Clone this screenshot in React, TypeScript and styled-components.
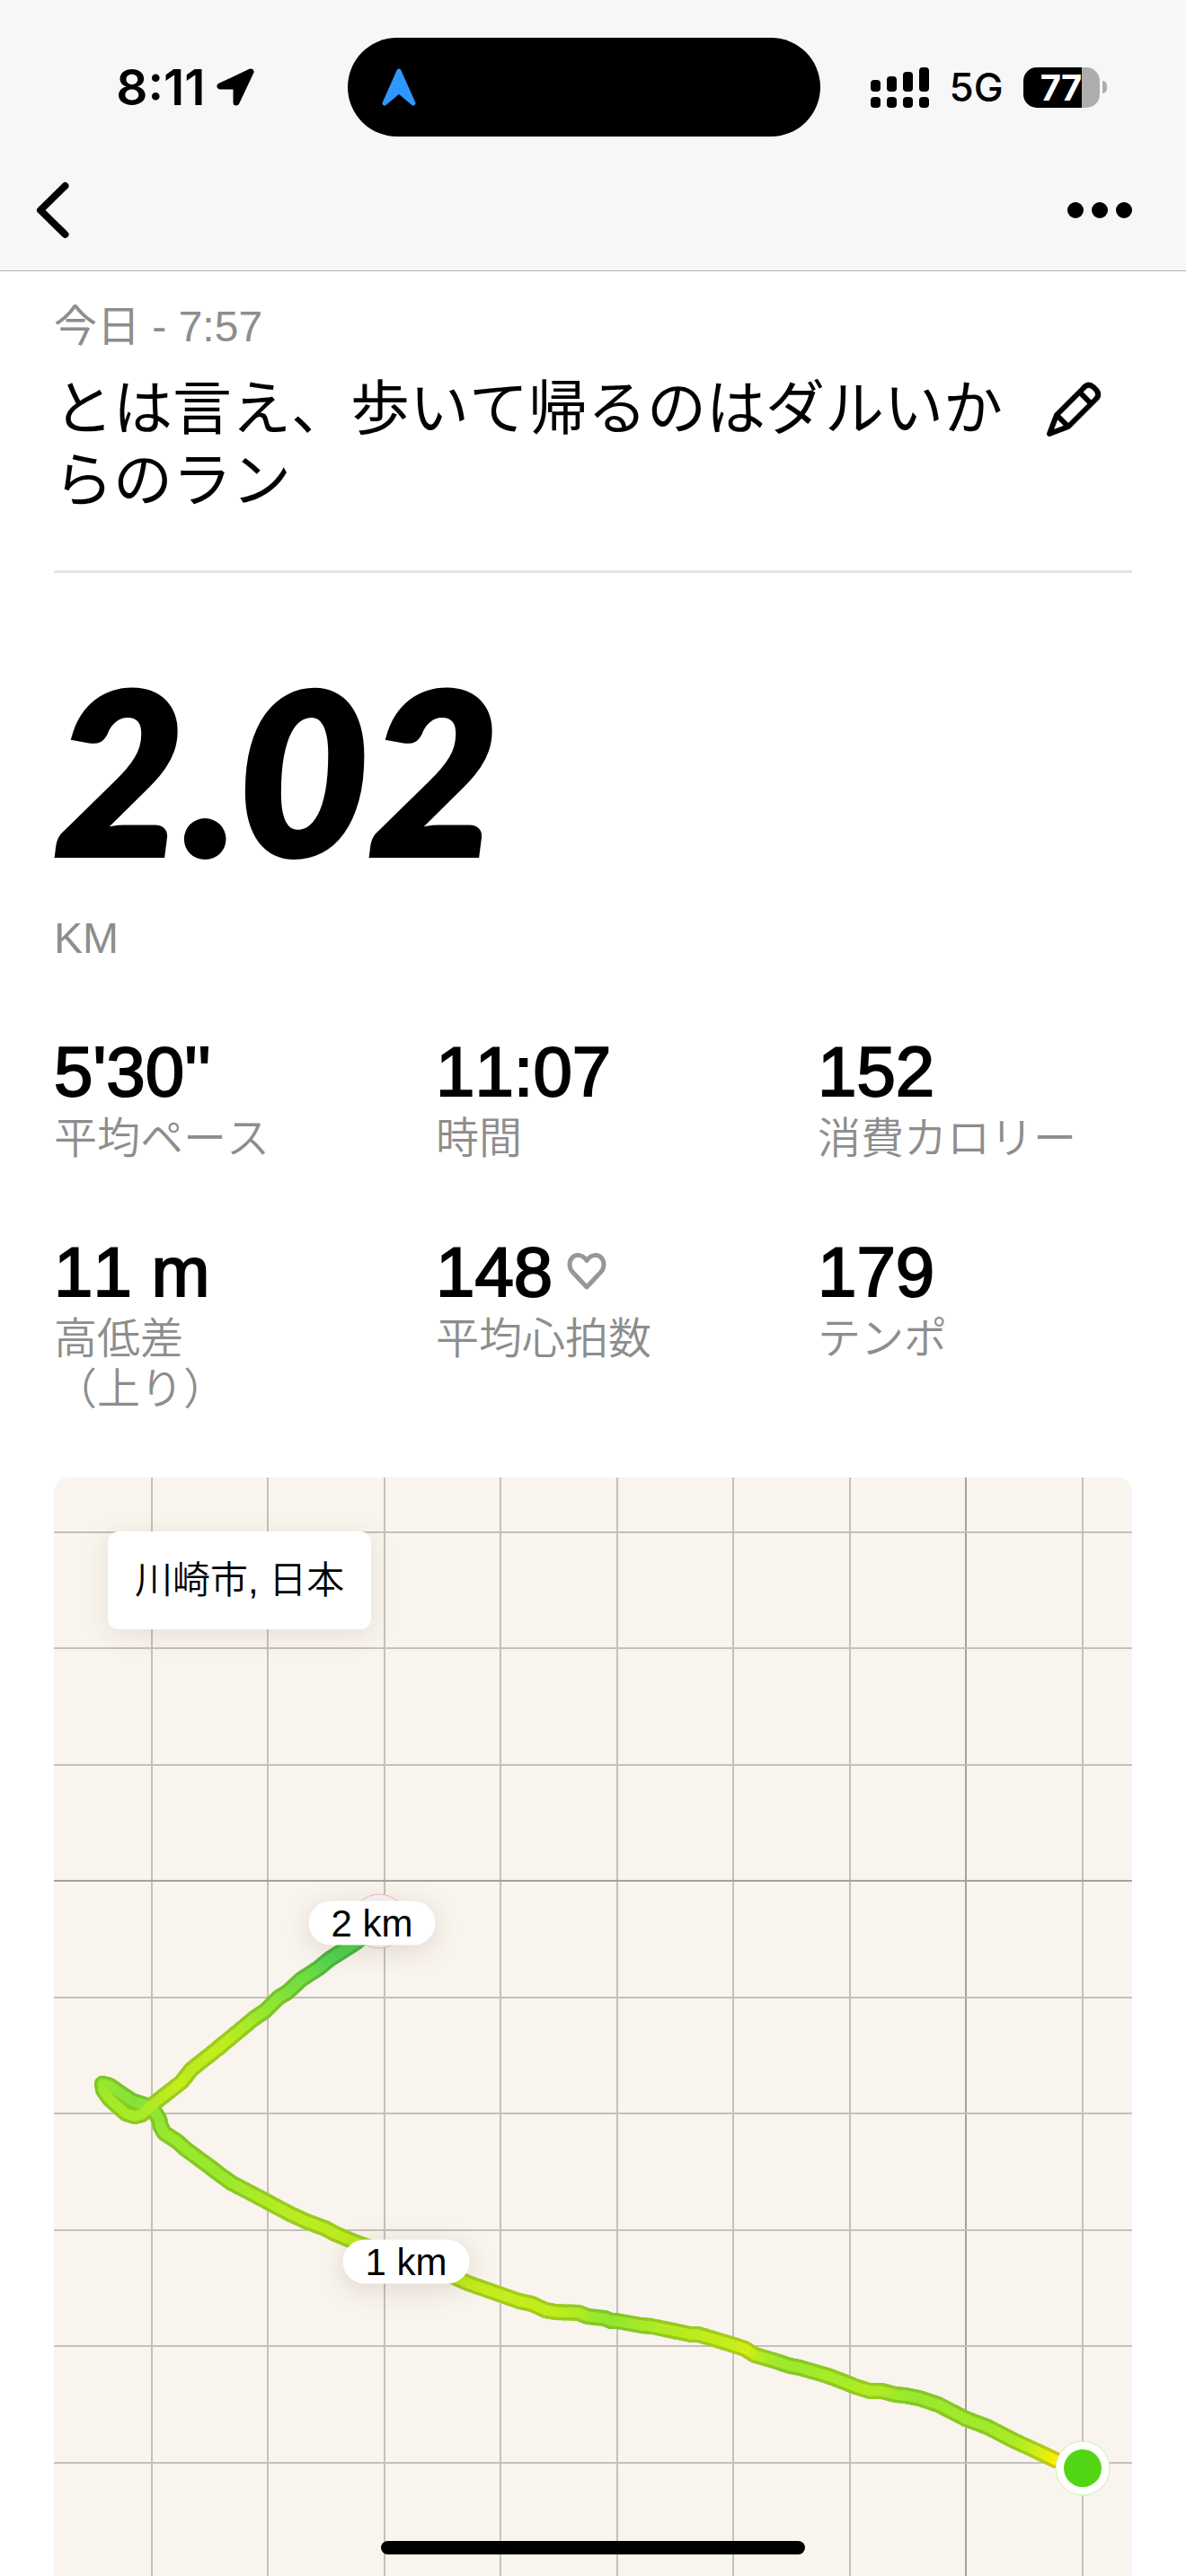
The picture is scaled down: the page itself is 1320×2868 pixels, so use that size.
import React from "react";
import styled, { createGlobalStyle } from "styled-components";

const GlobalStyle = createGlobalStyle`
  * { box-sizing: border-box; }
  body {
    margin: 0;
    background: #ffffff;
    color: #000000;
    font-family: "Liberation Sans", "Noto Sans CJK JP", sans-serif;
    font-kerning: none;
  }
  h1, p, dl, dt, dd { margin: 0; font-weight: 400; }
`;

const Screen = styled.div`
  display: flex;
  flex-direction: column;
`;

const Header = styled.header`
  background: #f7f7f7;
  border-bottom: 1px solid #b2b2b2;
  padding-bottom: 28px;
`;

const StatusBar = styled.div`
  display: grid;
  grid-template-columns: 1fr 526px 1fr;
  align-items: center;
  height: 194px;
  padding-right: 21px;
  font-family: Inter, sans-serif;
`;

const ClockGroup = styled.div`
  display: flex;
  align-items: center;
  justify-content: flex-end;
  gap: 12px;
  padding-right: 104px;
  font-size: 55px;
  font-weight: 600;
  line-height: 60px;
`;

const Island = styled.div`
  display: flex;
  align-items: center;
  height: 110px;
  padding: 0 38px;
  border-radius: 55px;
  background: #000000;
`;

const StatusIcons = styled.div`
  display: flex;
  align-items: center;
  padding-left: 56px;
  gap: 22px;
  font-size: 44px;
  font-weight: 500;
  line-height: 60px;
`;

const Battery = styled.div`
  display: flex;
  align-items: center;
  gap: 3px;

  &::after {
    content: "";
    width: 5px;
    height: 14px;
    border-radius: 0 5px 5px 0;
    background: #adadad;
  }
`;

const BatteryBody = styled.div<{ $level: number }>`
  width: 85px;
  height: 45px;
  border-radius: 15px;
  background: linear-gradient(to right, #000000 ${(p) => p.$level}%, #adadad ${(p) => p.$level}%);
  color: #ffffff;
  font-size: 40px;
  font-weight: 700;
  line-height: 45px;
  text-align: center;
`;

const NavBar = styled.nav`
  display: flex;
  align-items: center;
  justify-content: space-between;
  height: 79px;
  padding: 0 60px 0 38px;
`;

const IconButton = styled.button`
  display: flex;
  flex: none;
  padding: 0;
  border: 0;
  background: none;
  color: inherit;
  cursor: pointer;
`;

const Main = styled.main`
  display: flex;
  flex-direction: column;
  padding: 32px 60px 0;
`;

const Muted = styled.p`
  color: #8d8d8d;
  font-size: 48px;
  line-height: 60px;
`;

const TitleRow = styled.div`
  display: flex;
  align-items: flex-start;
  gap: 48px;
  padding: 21px 34px 60px 0;
  border-bottom: 3px solid #e5e5e5;

  button { margin-top: 10px; }
`;

const Title = styled.h1`
  flex: 1;
  font-size: 66px;
  line-height: 80px;
`;

const Distance = styled.p`
  margin: 97px 0 40px;
  font-family: Lato, sans-serif;
  font-size: 250px;
  font-style: italic;
  font-weight: 900;
  line-height: 240px;
  -webkit-text-stroke: 6px #000000;
`;

const Stats = styled.dl`
  display: grid;
  grid-template-columns: repeat(3, 1fr);
  gap: 80px 75px;
  padding: 78px 0 70px;
`;

const Stat = styled.div`
  display: flex;
  flex-direction: column-reverse;
  justify-content: flex-end;
  gap: 7px;
`;

const StatLabel = styled.dt`
  color: #8d8d8d;
  font-size: 48px;
  font-weight: 350;
  line-height: 56px;
  white-space: pre-line;
`;

const StatValue = styled.dd`
  display: flex;
  align-items: center;
  gap: 16px;
  font-size: 78px;
  line-height: 80px;
  -webkit-text-stroke: 2px #000000;
`;

const MapCard = styled.section`
  position: relative;
  overflow: hidden;
  border-radius: 16px 16px 0 0;
  background: #f9f4ed;
`;

const MapDrawing = styled.svg`
  display: block;
  width: 100%;
  height: auto;
`;

const Place = styled.div`
  position: absolute;
  top: 60px;
  left: 60px;
  padding: 0 30px;
  border-radius: 12px;
  background: #ffffff;
  box-shadow: 0 6px 30px rgba(60, 50, 20, 0.1);
  font-size: 42px;
  line-height: 109px;
  font-weight: 350;
`;

const KmPin = styled.div<{ $x: number; $y: number }>`
  position: absolute;
  left: ${(p) => p.$x / 12}%;
  top: ${(p) => (p.$y / 1223) * 100}%;
  width: 141px;
  transform: translate(-50%, -50%);
  border-radius: 25px;
  background: #ffffff;
  box-shadow: 0 6px 30px rgba(60, 50, 20, 0.14);
  font-size: 42px;
  line-height: 49px;
  text-align: center;
`;

const HomeIndicator = styled.div`
  position: fixed;
  bottom: 24px;
  left: 50%;
  width: 472px;
  height: 15px;
  margin-left: -236px;
  border-radius: 8px;
  background: #000000;
`;

const LocationArrow = () => (
  <svg width="42" height="42" viewBox="0 0 42 42" aria-hidden="true">
    <path d="M38 4 L4 20 L22 20 L22 38 Z" fill="#000" stroke="#000" strokeWidth="7" strokeLinejoin="round" />
  </svg>
);

const NavigationArrow = () => (
  <svg width="38" height="42" viewBox="0 0 38 42" aria-hidden="true">
    <path d="M19 3 L3 39 L19 25.5 L35 39 Z" fill="#2f98ff" stroke="#2f98ff" strokeWidth="5" strokeLinejoin="round" />
  </svg>
);

const Signal = () => (
  <svg width="66" height="45" viewBox="0 0 66 45" aria-label="電波">
    {[14, 10, 5, 0].map((top, i) => (
      <g key={top}>
        <rect x={i * 18} y={top} width="11" height={27 - top} rx="4" />
        <rect x={i * 18} y="33" width="11" height="12" rx="4" />
      </g>
    ))}
  </svg>
);

const BackIcon = () => (
  <svg width="42" height="66" viewBox="0 0 42 66" aria-hidden="true">
    <path d="M34.5 6 L7 33 L34.5 60" fill="none" stroke="currentColor" strokeWidth="8" strokeLinecap="round" strokeLinejoin="round" />
  </svg>
);

const MoreIcon = () => (
  <svg width="72" height="18" viewBox="0 0 72 18" aria-hidden="true">
    <circle cx="9" cy="9" r="9" />
    <circle cx="36" cy="9" r="9" />
    <circle cx="63" cy="9" r="9" />
  </svg>
);

const PencilIcon = () => (
  <svg width="62" height="62" viewBox="0 0 62 62" fill="none" stroke="currentColor" strokeWidth="6" strokeLinejoin="round" aria-hidden="true">
    <path d="M4 58 L12 37 L42 7 Q47 1 53 6 L56 9 Q61 15 55 20 L25 50 Z" />
    <path d="M38 12 L50 24 M12 37 L25 50" />
  </svg>
);

const HeartIcon = () => (
  <svg width="44" height="42" viewBox="0 0 44 42" aria-label="心拍">
    <path d="M22 8.5 C17.5 1.5 9.5 1 6 5 C1.5 10 2.5 17.5 6.5 21.5 L22 38 L37.5 21.5 C41.5 17.5 42.5 10 38 5 C34.5 1 26.5 1.5 22 8.5 Z" fill="none" stroke="#979797" strokeWidth="5" strokeLinejoin="round" />
  </svg>
);

type Point = [x: number, y: number, pace: number];

// Route points in map units, with the pace at each point from 0 (slow) to 1 (fast).
const route: Point[] = [
  [1145, 1103, 1], [1115, 1094, 1], [1094, 1084, 0.85], [1068, 1072, 0.6], [1039, 1057, 0.5],
  [1015, 1048, 0.5], [984, 1032, 0.48], [963, 1025, 0.45], [947, 1022, 0.45], [937, 1021, 0.5],
  [921, 1017, 0.58], [908, 1017, 0.62], [892, 1012, 0.62], [877, 1006, 0.56], [861, 1000, 0.55],
  [830, 991, 0.5], [819, 989, 0.48], [801, 983, 0.5], [780, 977, 0.7], [769, 970, 0.85],
  [754, 965, 0.8], [717, 954, 0.72], [709, 954, 0.7], [665, 945, 0.6], [654, 944, 0.55],
  [626, 939, 0.42], [620, 939, 0.42], [613, 936, 0.42], [594, 934, 0.45], [584, 930, 0.6],
  [558, 929, 0.72], [547, 927, 0.74], [532, 920, 0.75], [518, 917, 0.76], [461, 897, 0.76],
  [443, 889, 0.74], [337, 852, 0.7], [313, 842, 0.72], [302, 836, 0.7], [283, 829, 0.7],
  [263, 820, 0.68], [237, 806, 0.62], [197, 785, 0.5], [182, 774, 0.46], [173, 767, 0.45],
  [147, 748, 0.45], [137, 739, 0.46], [123, 730, 0.46], [119, 723, 0.44], [117, 714, 0.4],
  [110, 703, 0.4], [103, 699, 0.38], [87, 694, 0.32], [72, 684, 0.35], [62, 677, 0.4],
  [54, 675, 0.42], [55, 682, 0.46], [62, 692, 0.52], [80, 708, 0.56], [90, 711, 0.56],
  [98, 709, 0.56], [110, 698, 0.6], [142, 673, 0.78], [153, 659, 0.68], [182, 636, 0.76],
  [188, 631, 0.74], [223, 602, 0.5], [235, 594, 0.42], [250, 579, 0.36], [260, 573, 0.3],
  [275, 559, 0.22], [295, 546, 0.1], [307, 536, 0.02], [323, 526, 0], [337, 517, 0], [362, 497, 0],
];

const ramp = [
  { at: 0, fill: [82, 212, 82], edge: [76, 182, 66] },
  { at: 0.45, fill: [154, 232, 46], edge: [132, 200, 38] },
  { at: 0.8, fill: [200, 238, 26], edge: [166, 204, 28] },
  { at: 1, fill: [255, 240, 0], edge: [208, 196, 20] },
];

const colorAt = (pace: number, kind: "fill" | "edge") => {
  const next = Math.max(1, ramp.findIndex((stop) => stop.at >= pace));
  const a = ramp[next - 1];
  const b = ramp[next];
  const t = (pace - a.at) / (b.at - a.at);
  return `rgb(${a[kind].map((v, i) => Math.round(v + (b[kind][i] - v) * t)).join(",")})`;
};

const STEPS = 5;
const pieces = route.slice(1).flatMap(([x2, y2, p2], i) => {
  const [x1, y1, p1] = route[i];
  return Array.from({ length: STEPS }, (_, s) => {
    const mix = (a: number, b: number, k: number) => a + ((b - a) * k) / STEPS;
    return {
      key: `${i}-${s}`,
      x1: mix(x1, x2, s),
      y1: mix(y1, y2, s),
      x2: mix(x1, x2, s + 1),
      y2: mix(y1, y2, s + 1),
      pace: mix(p1, p2, s),
    };
  });
});

const RouteLine = ({ kind, width }: { kind: "fill" | "edge"; width: number }) => (
  <g strokeWidth={width} strokeLinecap="round">
    {pieces.map(({ key, pace, ...line }) => (
      <line key={key} {...line} stroke={colorAt(pace, kind)} />
    ))}
  </g>
);

const columns = [109, 238, 368, 497, 627, 756, 886, 1015, 1145];
const rows = [61, 190, 320, 449, 579, 708, 838, 967, 1097];

const RouteMap = () => (
  <MapDrawing viewBox="0 0 1200 1223" role="img" aria-label="ランのルート">
    <g strokeWidth="2">
      {columns.map((x) => (
        <path key={x} d={`M${x} 0V1223`} stroke={x === 1015 ? "#a5a29d" : "#c4c1ba"} />
      ))}
      {rows.map((y) => (
        <path key={y} d={`M0 ${y}H1200`} stroke={y === 449 ? "#a5a29d" : "#c4c1ba"} />
      ))}
    </g>
    <RouteLine kind="edge" width={18} />
    <RouteLine kind="fill" width={11} />
    <circle cx="362" cy="494" r="30" fill="#f6f6f6" stroke="#f3b8b4" strokeWidth="1" />
    <circle cx="1145" cy="1103" r="30" fill="#fff" stroke="#c9f0b8" strokeWidth="1" />
    <circle cx="1145" cy="1103" r="21" fill="#52d613" />
  </MapDrawing>
);

const stats = [
  { label: "平均ペース", value: "5'30''" },
  { label: "時間", value: "11:07" },
  { label: "消費カロリー", value: "152" },
  { label: "高低差\n（上り）", value: "11 m" },
  { label: "平均心拍数", value: "148", icon: <HeartIcon /> },
  { label: "テンポ", value: "179" },
];

export default function App() {
  return (
    <Screen>
      <GlobalStyle />
      <Header>
        <StatusBar>
          <ClockGroup>
            8:11
            <LocationArrow />
          </ClockGroup>
          <Island>
            <NavigationArrow />
          </Island>
          <StatusIcons>
            <Signal />
            5G
            <Battery>
              <BatteryBody $level={77}>77</BatteryBody>
            </Battery>
          </StatusIcons>
        </StatusBar>
        <NavBar>
          <IconButton type="button" aria-label="戻る">
            <BackIcon />
          </IconButton>
          <IconButton type="button" aria-label="その他">
            <MoreIcon />
          </IconButton>
        </NavBar>
      </Header>
      <Main>
        <Muted>今日 - 7:57</Muted>
        <TitleRow>
          <Title>とは言え、歩いて帰るのはダルいからのラン</Title>
          <IconButton type="button" aria-label="タイトルを編集">
            <PencilIcon />
          </IconButton>
        </TitleRow>
        <Distance>2.02</Distance>
        <Muted>KM</Muted>
        <Stats>
          {stats.map(({ label, value, icon }) => (
            <Stat key={label}>
              <StatLabel>{label}</StatLabel>
              <StatValue>
                {value}
                {icon}
              </StatValue>
            </Stat>
          ))}
        </Stats>
        <MapCard>
          <RouteMap />
          <Place>川崎市, 日本</Place>
          <KmPin $x={354} $y={496}>2 km</KmPin>
          <KmPin $x={392} $y={873}>1 km</KmPin>
        </MapCard>
      </Main>
      <HomeIndicator />
    </Screen>
  );
}
